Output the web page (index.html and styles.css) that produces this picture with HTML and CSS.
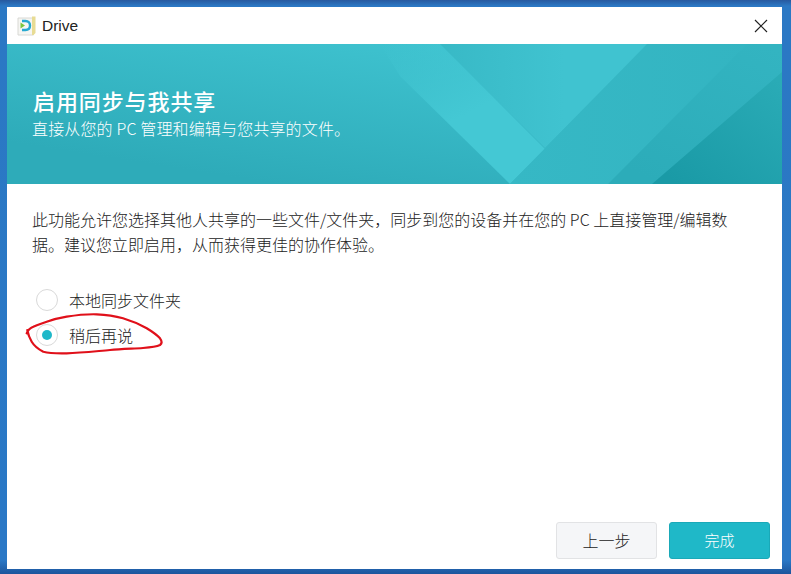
FILE: index.html
```html
<!DOCTYPE html>
<html lang="zh-CN">
<head>
    <meta charset="UTF-8">
    <meta name="viewport" content="width=device-width, initial-scale=1.0">
    <title>Drive</title>
    <link rel="stylesheet" href="styles.css">
</head>
<body>

    <div class="window">
        <!-- Barre de titre -->
        <div class="titlebar">
            <svg class="app-icon" width="20" height="22" viewBox="0 0 20 22">
                <path d="M1 3h15.500v17H1z" fill="#f6f6f3" stroke="#d8d8d4" stroke-width="1"/>
                <path d="M15 1.500h3.500v16.500l-2 2H15z" fill="#e8dc94"/>
                <path d="M5 6h3.500c3 0 4.500 2 4.500 4.500S11.500 15 8.500 15H5" fill="none" stroke="#27a9d0" stroke-width="2.400"/>
                <path d="M3.500 7.500l4.500 3-4.500 3z" fill="#7cc63e"/>
            </svg>
            <span class="app-name">Drive</span>
            <svg class="close-icon" width="14" height="14" viewBox="0 0 14 14">
                <path d="M1 1l12 12M13 1L1 13" stroke="#222" stroke-width="1.200" fill="none"/>
            </svg>
        </div>

        <!-- Bandeau -->
        <div class="banner">
            <svg class="banner-bg" width="775" height="140" viewBox="0 0 775 140">
                <defs>
                    <linearGradient id="base" x1="0" y1="0.700" x2="0.600" y2="0">
                        <stop offset="0" stop-color="#2eabb9"/>
                        <stop offset="1" stop-color="#3fc3d0"/>
                    </linearGradient>
                    <linearGradient id="band" x1="0" y1="0" x2="0.600" y2="1">
                        <stop offset="0" stop-color="#44c8d4" stop-opacity="0"/>
                        <stop offset="0.600" stop-color="#44c8d4"/>
                    </linearGradient>
                    <linearGradient id="middle" x1="0" y1="0" x2="1" y2="0">
                        <stop offset="0" stop-color="#38b9c6"/>
                        <stop offset="0.600" stop-color="#40c3d0"/>
                    </linearGradient>
                    <linearGradient id="right" x1="0" y1="0" x2="1" y2="0">
                        <stop offset="0" stop-color="#36b8c5"/>
                        <stop offset="1" stop-color="#33b4c1"/>
                    </linearGradient>
                    <linearGradient id="right2" x1="0.300" y1="1" x2="0.900" y2="0">
                        <stop offset="0" stop-color="#2cacb9"/>
                        <stop offset="1" stop-color="#33b4c1"/>
                    </linearGradient>
                    <linearGradient id="right3" x1="0.200" y1="1" x2="1" y2="0.100">
                        <stop offset="0" stop-color="#1a9aa6"/>
                        <stop offset="1" stop-color="#2aabb6"/>
                    </linearGradient>
                </defs>
                <rect width="775" height="140" fill="url(#base)"/>
                <path d="M373 0h60l105 105-35 35-110-108z" fill="url(#band)"/>
                <path d="M433 0h207L538 104z" fill="url(#middle)"/>
                <path d="M640 0h135v140H503z" fill="url(#right)"/>
                <path d="M740 0h35v140H601z" fill="url(#right2)"/>
                <path d="M775 28v112H645z" fill="url(#right3)"/>
            </svg>
            <h1 class="banner-title">启用同步与我共享</h1>
            <p class="banner-sub">直接从您的 PC 管理和编辑与您共享的文件。</p>
        </div>

        <!-- Contenu -->
        <div class="content">
            <p class="intro">此功能允许您选择其他人共享的一些文件/文件夹，同步到您的设备并在您的 PC 上直接管理/编辑数据。建议您立即启用，从而获得更佳的协作体验。</p>
            <div class="options">
                <label class="option"><span class="radio"></span>本地同步文件夹</label>
                <label class="option"><span class="radio checked"></span>稍后再说</label>
            </div>
        </div>

        <!-- Boutons -->
        <div class="actions">
            <button class="btn">上一步</button>
            <button class="btn primary">完成</button>
        </div>

        <!-- Annotation rouge -->
        <svg class="scribble" width="150" height="50" viewBox="0 0 150 50">
            <path d="M1.700 20.300C3 17 5 15 8.300 13.700C13 11.500 17 10.500 21.700 8.700C28 6.500 34 5 41.700 3.700C52 2 62 1 71.700 1.300C81 1.700 90 3 98 5.300C107 8 115 11.500 121.700 15.300C127 18.500 132 22 135 25.300C137 28 137 30.500 135 32C131 34 125 34.500 118 35C107 35.700 96 36 85 37C70 38.300 55 40 41.700 40.300C33 40.500 25 40.500 18.300 38.700C13 36 9 32.500 6.700 28.700C4.500 25 3 21 2.300 17" fill="none" stroke="#e0101a" stroke-width="2.200" stroke-linecap="round"/>
        </svg>
    </div>

</body>
</html>
```

FILE: styles.css
```css
/* Style de la page */
html, body {
    height: 100%;
}

body {
    margin: 0;
    padding: 7px 9px 5px 7px;
    box-sizing: border-box;
    background: linear-gradient(#27599f 0, #2b78c4 6px, #2a78c6 560px, #1c559c 574px);
    font-family: "Noto Sans CJK SC", "Noto Sans", sans-serif;
    overflow: hidden;
}

.window {
    position: relative;
    height: 100%;
    background-color: #fff;
    display: flex;
    flex-direction: column;
}

/* Barre de titre */
.titlebar {
    height: 37px;
    flex: none;
    display: flex;
    align-items: center;
    padding: 0 14px 0 10px;
}

.app-icon {
    margin-right: 5px;
}

.app-name {
    font-family: "Liberation Sans", sans-serif;
    font-size: 15.500px;
    color: #222;
}

.close-icon {
    margin-left: auto;
}

/* Bandeau */
.banner {
    position: relative;
    height: 140px;
    flex: none;
    padding: 42px 0 0 26px;
    box-sizing: border-box;
    color: #fff;
}

.banner-bg {
    position: absolute;
    top: 0;
    left: 0;
}

.banner-title {
    position: relative;
    margin: 0;
    font-size: 22px;
    font-weight: 500;
    line-height: 28px;
    letter-spacing: 0.900px;
}

.banner-sub {
    position: relative;
    margin: 2px 0 0 -1px;
    font-size: 16px;
    line-height: 24px;
    font-weight: 300;
    letter-spacing: 0.150px;
}

/* Contenu */
.content {
    flex: 1;
    padding: 23px 25px 0 25px;
}

.intro {
    margin: 0;
    font-size: 16px;
    line-height: 25px;
    color: #222;
    font-weight: 300;
}

.options {
    margin-top: 32px;
    display: flex;
    flex-direction: column;
    gap: 13px;
}

.option {
    display: flex;
    align-items: center;
    height: 22px;
    padding-left: 4px;
    font-size: 16px;
    color: #222;
    font-weight: 300;
}

.radio {
    width: 20px;
    height: 20px;
    border: 1px solid #d9d9d9;
    border-radius: 50%;
    margin-right: 11px;
    display: flex;
    align-items: center;
    justify-content: center;
    background-color: #fff;
}

.radio.checked::after {
    content: "";
    width: 10px;
    height: 10px;
    border-radius: 50%;
    background-color: #1fb8c9;
}

/* Boutons */
.actions {
    flex: none;
    display: flex;
    justify-content: flex-end;
    gap: 12px;
    padding: 0 12px 10px 0;
}

.btn {
    width: 101px;
    height: 37px;
    padding: 0 0 2px;
    font-family: inherit;
    font-size: 16px;
    font-weight: 300;
    color: #222;
    background-color: #f5f6f8;
    border: 1px solid #e2e3e5;
    border-radius: 3px;
}

.btn.primary {
    color: #fff;
    background-color: #1fb8c8;
    border-color: #1aa9b8;
    font-size: 15px;
}

/* Annotation */
.scribble {
    position: absolute;
    left: 18px;
    top: 306px;
}
```
